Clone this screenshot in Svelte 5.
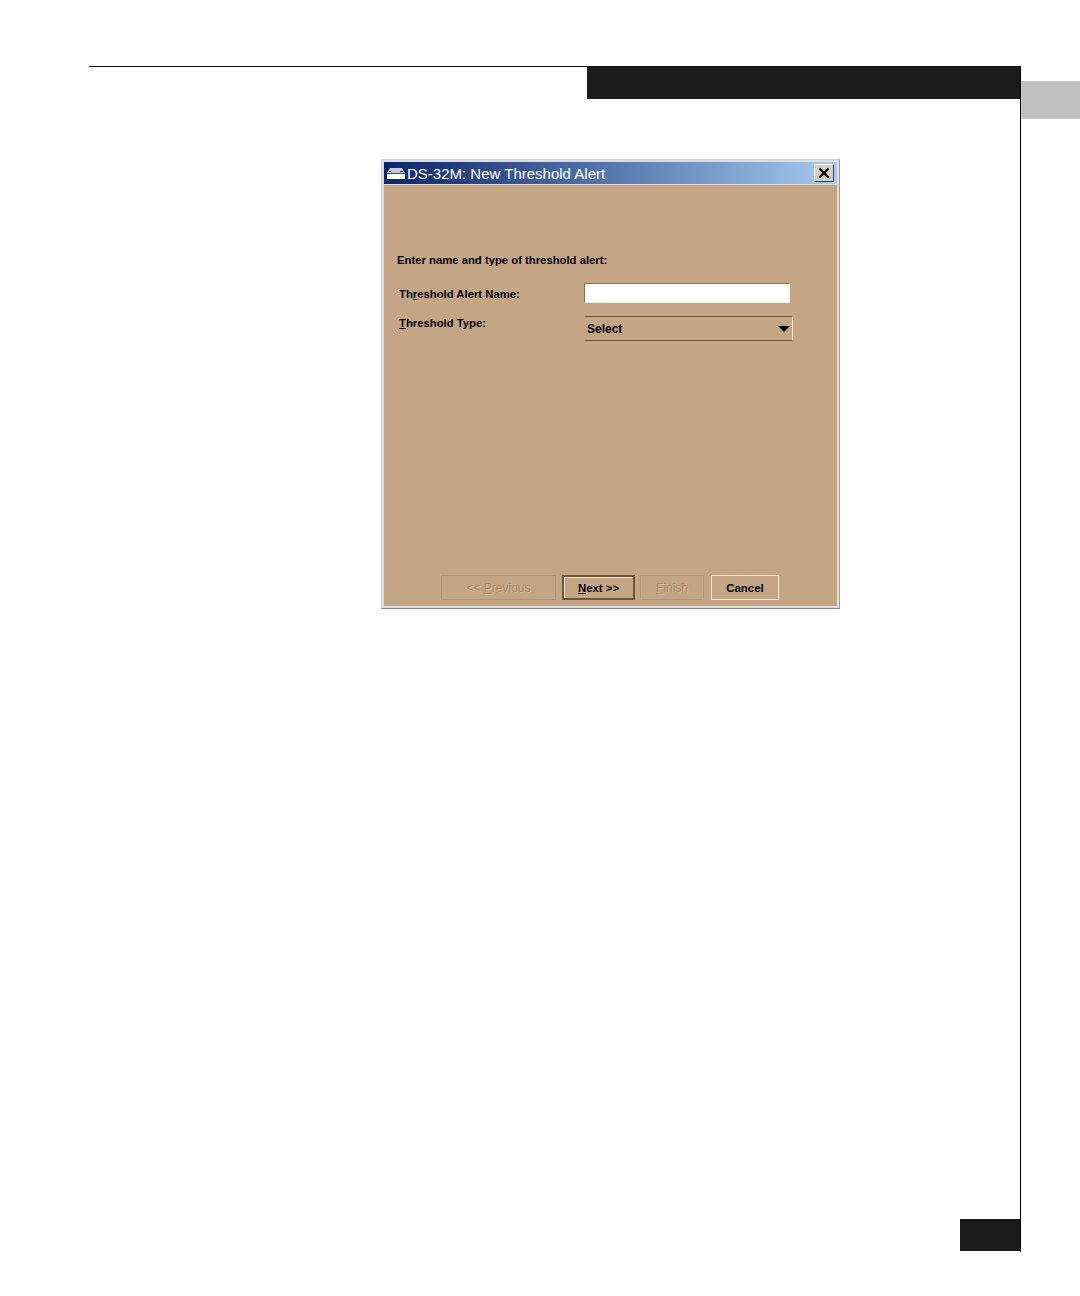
<script>
    const buttons = [
        { key: 'P', rest: 'revious', before: '<< ', cls: 'prev off' },
        { key: 'N', rest: 'ext >>', before: '', cls: 'next' },
        { key: 'F', rest: 'inish', before: '', cls: 'finish off' },
        { key: '', rest: 'Cancel', before: '', cls: 'cancel' }
    ];
</script>

<div class="page">
    <div class="sheet">
        <div class="head-bar"></div>

        <div class="dialog">
            <div class="titlebar">
                <svg class="app-icon" width="20" height="13" viewBox="0 0 20 13">
                    <path d="M4 1h12l3 5H1z" fill="#c8ccd8" />
                    <path d="M1 6h18v1H1z" fill="#3a4a80" />
                    <path d="M1 7h18v5H1z" fill="#fff" />
                    <path d="M3 4h2v1H3zM14 4h3v1h-3z" fill="#0a246a" />
                </svg>
                <span class="title">DS-32M: New Threshold Alert</span>
                <div class="close">
                    <svg width="12" height="12" viewBox="0 0 12 12">
                        <path d="M1.5 1.5l9 9M10.5 1.5l-9 9" stroke="#000" stroke-width="2.2" fill="none" />
                    </svg>
                </div>
            </div>

            <div class="body">
                <p class="intro">Enter name and type of threshold alert:</p>

                <div class="row name-row">
                    <span class="label">Th<u>r</u>eshold Alert Name:</span>
                    <div class="input"></div>
                </div>
                <div class="row type-row">
                    <span class="label"><u>T</u>hreshold Type:</span>
                    <div class="select">
                        <span>Select</span>
                        <i class="arrow"></i>
                    </div>
                </div>

                <div class="buttons">
                    {#each buttons as b}
                        <div class="btn {b.cls}">{b.before}{#if b.key}<u>{b.key}</u>{/if}{b.rest}</div>
                    {/each}
                </div>
            </div>
        </div>

        <div class="foot-bar"></div>
    </div>
    <div class="tab"></div>
</div>

<style>
    :global(body) { margin: 0; background: #fff; }
    .page { width: 1080px; height: 1296px; box-sizing: border-box; padding: 66px 0 0 89px; display: flex; align-items: flex-start; font-family: "Liberation Sans", Arial, sans-serif; }
    .sheet { width: 932px; height: 1186px; box-sizing: border-box; border-top: 1px solid #111; border-right: 1px solid #000; display: flex; flex-direction: column; flex: none; }
    .head-bar { width: 433px; height: 32px; background: #1a1a1a; align-self: flex-end; flex: none; }
    .foot-bar { width: 60px; height: 32px; background: #1a1a1a; align-self: flex-end; margin: auto 0 1px; flex: none; }
    .tab { width: 59px; height: 38px; margin-top: 15px; box-sizing: border-box; background: #bfbfbf; border: 1px solid #c9c9c9; border-right: 0; flex: none; }

    .dialog { width: 459px; height: 450px; margin: 60px 0 0 292px; box-sizing: border-box; border: 1px solid; border-color: #cfcfcf #9a9a9a #808080 #cfcfcf; padding: 2px; background: #dedede; display: flex; flex-direction: column; flex: none; }
    .titlebar { height: 23px; flex: none; box-sizing: border-box; display: flex; align-items: center; padding: 0 3px 1px 2px; border-bottom: 1px solid #dcd8d0; background: linear-gradient(90deg, #0a246a, #a6caf0); color: #fff; }
    .app-icon { flex: none; margin: 1px 1px 0 0; }
    .title { font-size: 15px; white-space: nowrap; margin-top: 2px; }
    .close { width: 20px; height: 18px; margin-left: auto; box-sizing: border-box; background: #d4d0c8; border: 1px solid; border-color: #fff #404040 #404040 #fff; display: flex; align-items: center; justify-content: center; }

    .body { flex: 1; background: #c4a685; display: flex; flex-direction: column; padding: 0 30px 6px 13px; color: #000; font-size: 11.3px; font-weight: bold; }
    .intro { margin: 68px 0 0; font-size: 11.3px; line-height: 14px; }
    .row { display: flex; align-items: flex-start; margin-left: 2px; }
    .label { width: 185px; flex: none; line-height: 14px; }
    .name-row { margin-top: 16px; }
    .name-row .label { margin-top: 4px; }
    .input { width: 206px; height: 20px; box-sizing: border-box; background: #fff; border: 1px solid; border-color: #8a7050 #f4ece0 #f4ece0 #8a7050; }
    .type-row { margin-top: 13px; }
    .select { width: 209px; height: 25px; box-sizing: border-box; border: 1px solid; border-color: #6d5639 #f0e6d8 #6d5639 #c4a685; display: flex; align-items: center; justify-content: space-between; padding: 1px 2px 0 2px; font-size: 12px; }
    .arrow { width: 0; height: 0; border: 6px solid transparent; border-top: 6px solid #000; border-bottom: 0; }

    .buttons { margin-top: auto; display: flex; gap: 6px; margin-left: 44px; font-size: 11.4px; }
    .btn { height: 25px; box-sizing: border-box; display: flex; align-items: center; justify-content: center; white-space: pre; border: 1px solid #f4ece0; }
    .prev { width: 115px; }
    .next { width: 73px; border: 2px solid #6d5639; box-shadow: inset 1px 1px 0 #efe4d4; }
    .finish { width: 64px; margin-left: -1px; }
    .cancel { width: 68px; margin-left: 1px; }
    .off { border-color: #b4956f; color: #a58a66; font-size: 12px; font-weight: normal; text-shadow: 1px 1px 0 #d4bb9c; }
</style>
